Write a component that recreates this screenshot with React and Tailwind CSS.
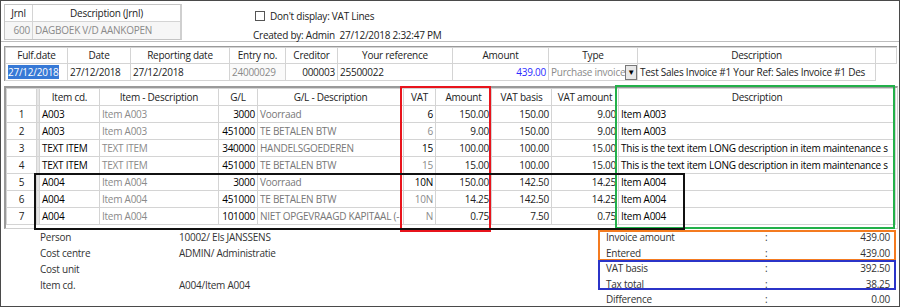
import React from "react";

const gridCols = [30, 3, 60, 119, 39, 146, 32, 56, 60, 67, 277];
const rows = [
  ["1", "A003", "Item A003", "3000", "Voorraad", "6", "150.00", "150.00", "9.00", "Item A003", true],
  ["2", "A003", "Item A003", "451000", "TE BETALEN BTW", "6", "9.00", "150.00", "9.00", "Item A003", false],
  ["3", "TEXT ITEM", "TEXT ITEM", "340000", "HANDELSGOEDEREN", "15", "100.00", "100.00", "15.00", "This is the text item LONG description in item maintenance s", true],
  ["4", "TEXT ITEM", "TEXT ITEM", "451000", "TE BETALEN BTW", "15", "15.00", "100.00", "15.00", "This is the text item LONG description in item maintenance s", false],
  ["5", "A004", "Item A004", "3000", "Voorraad", "10N", "150.00", "142.50", "14.25", "Item A004", true],
  ["6", "A004", "Item A004", "451000", "TE BETALEN BTW", "10N", "14.25", "142.50", "14.25", "Item A004", false],
  ["7", "A004", "Item A004", "101000", "NIET OPGEVRAAGD KAPITAAL (-", "N", "0.75", "7.50", "0.75", "Item A004", false],
];

const hdrCols = [62, 63, 99, 56, 52, 115, 96, 89, 238, 21];

export default function App() {
  const td = "border border-[#d4d4d4] h-[17px] px-[2px] whitespace-nowrap overflow-hidden leading-[15px]";
  return (
    <div className="relative w-[900px] h-[307px] overflow-hidden border border-[#4a4a4a] bg-white text-[10px] tracking-[-0.25px] text-[#222] font-['Open_Sans',sans-serif]">
      {/* top section */}
      <div className="flex h-[41px] border-b border-[#bdbdbd]">
        <div className="mt-[3px] ml-[3px] w-[178px] h-[36px] border border-[#c4c4c4] border-r-2 border-r-[#cfcfcf]">
          <div className="flex h-[17px] border-b border-[#d4d4d4]">
            <div className="w-[28px] border-r border-[#d4d4d4] text-center leading-[16px]">Jrnl</div>
            <div className="flex-1 text-center leading-[16px]">Description (Jrnl)</div>
          </div>
          <div className="flex h-[17px] bg-[#f6f6f6] text-[#8a8a8a]">
            <div className="w-[28px] border-r border-[#d4d4d4] text-right pr-[2px] leading-[17px]">600</div>
            <div className="flex-1 pl-[2px] leading-[17px] whitespace-nowrap overflow-hidden">DAGBOEK V/D AANKOPEN</div>
          </div>
        </div>
        <div className="ml-[71px] flex flex-col">
          <div className="mt-[8px] flex items-center h-[14px]">
            <div className="w-[10px] h-[10px] border border-[#555] bg-white ml-[2px]"></div>
            <span className="ml-[5px]">Don't display: VAT Lines</span>
          </div>
          <div className="mt-[5px] whitespace-nowrap">Created by: Admin&nbsp;&nbsp;27/12/2018 2:32:47 PM</div>
        </div>
      </div>

      {/* header grid */}
      <div className="mt-[4px] ml-[3px] w-[893px] border-t border-l border-[#9a9a9a]">
        <table className="table-fixed border-collapse w-[891px]">
          <colgroup>
            {hdrCols.map((w, i) => (
              <col key={i} style={{ width: w }} />
            ))}
          </colgroup>
          <tbody>
            <tr className="h-[16px]">
              {["Fulf.date", "Date", "Reporting date", "Entry no.", "Creditor", "Your reference", "Amount", "Type", "Description", ""].map((h, i) => (
                <td key={i} className="border border-[#d4d4d4] text-center leading-[15px] whitespace-nowrap overflow-hidden">{h}</td>
              ))}
            </tr>
            <tr className="h-[17px]">
              <td className={td}><span className="bg-[#3779d6] text-white">27/12/2018</span></td>
              <td className={td}>27/12/2018</td>
              <td className={td}>27/12/2018</td>
              <td className={td + " text-[#8a8a8a] bg-[#fafafa]"}>24000029</td>
              <td className={td + " text-right"}>000003</td>
              <td className={td}>25500022</td>
              <td className={td + " text-right text-[#2b2bff]"}>439.00</td>
              <td className="border border-[#d4d4d4] h-[17px] p-0">
                <div className="flex h-[15px] items-center">
                  <span className="flex-1 pl-[2px] text-[#8a8a8a] whitespace-nowrap overflow-hidden leading-[15px]">Purchase invoice</span>
                  <span className="w-[12px] h-[15px] border border-[#777] bg-[#e8e8e8] flex items-center justify-center text-[8px] leading-none text-black">▼</span>
                </div>
              </td>
              <td className={td}>Test Sales Invoice #1 Your Ref: Sales Invoice #1 Des</td>
              <td className="border-t border-[#d4d4d4]"></td>
            </tr>
          </tbody>
        </table>
      </div>

      {/* main grid */}
      <div className="mt-[5px] ml-[3px] w-[894px] h-[143px] border-t-2 border-l-2 border-[#9a9a9a] border-b border-b-[#d0d0d0] border-r border-r-[#d0d0d0]">
        <table className="table-fixed border-collapse w-[889px]">
          <colgroup>
            {gridCols.map((w, i) => (
              <col key={i} style={{ width: w }} />
            ))}
          </colgroup>
          <tbody>
            <tr className="h-[17px]">
              {["", "", "Item cd.", "Item - Description", "G/L", "G/L - Description", "VAT", "Amount", "VAT basis", "VAT amount", "Description"].map((h, i) => (
                <td key={i} className={"border border-[#d4d4d4] text-center leading-[15px] whitespace-nowrap overflow-hidden " + (i === 1 ? "bg-[#e6e6e6]" : "")}>{h}</td>
              ))}
            </tr>
            {rows.map((r, idx) => (
              <tr key={idx} className="h-[17px]">
                <td className={td + " text-center"}>{r[0]}</td>
                <td className="border border-[#d4d4d4] bg-[#e6e6e6]"></td>
                <td className={td + " text-black"}>{r[1]}</td>
                <td className={td + " text-[#8a8a8a]"}>{r[2]}</td>
                <td className={td + " text-right text-black"}>{r[3]}</td>
                <td className={td + " text-[#777]"}>{r[4]}</td>
                <td className={td + " text-right " + (r[10] ? "text-black font-medium" : "text-[#8a8a8a]")}>{r[5]}</td>
                <td className={td + " text-right"}>{r[6]}</td>
                <td className={td + " text-right"}>{r[7]}</td>
                <td className={td + " text-right"}>{r[8]}</td>
                <td className={td + " text-black"}>{r[9]}</td>
              </tr>
            ))}
          </tbody>
        </table>
      </div>

      {/* bottom section */}
      <div className="flex">
        <div className="ml-[39px] w-[559px] flex flex-col text-[#333]">
          {[
            ["Person", "10002/ Els JANSSENS"],
            ["Cost centre", "ADMIN/ Administratie"],
            ["Cost unit", ""],
            ["Item cd.", "A004/Item A004"],
          ].map(([l, v]) => (
            <div key={l} className="flex h-[16px] leading-[16px]">
              <span className="w-[139px]">{l}</span>
              <span>{v}</span>
            </div>
          ))}
        </div>
        <div className="w-[293px] flex flex-col text-[#333]">
          {[
            ["Invoice amount", "439.00"],
            ["Entered", "439.00"],
            ["VAT basis", "392.50"],
            ["Tax total", "38.25"],
            ["Difference", "0.00"],
          ].map(([l, v]) => (
            <div key={l} className="flex leading-[16px] h-[15.5px]">
              <span className="w-[166px] pl-[7px]">{l}</span>
              <span className="w-[10px]">:</span>
              <span className="flex-1 text-right pr-[2px]">{v}</span>
            </div>
          ))}
        </div>
      </div>

      {/* annotation overlays */}
      <div className="absolute left-[399px] top-[85px] w-[91px] h-[146px] border-2 border-[#e8141c] pointer-events-none"></div>
      <div className="absolute left-[614px] top-[84px] w-[280px] h-[144px] border-2 border-[#22b04a] pointer-events-none"></div>
      <div className="absolute left-[33px] top-[172px] w-[651px] h-[57px] border-2 border-[#111] pointer-events-none"></div>
      <div className="absolute left-[597px] top-[229px] w-[298px] h-[31px] border-2 border-[#f47b20] pointer-events-none"></div>
      <div className="absolute left-[597px] top-[259px] w-[298px] h-[30px] border-2 border-[#2b34c8] pointer-events-none"></div>
    </div>
  );
}
